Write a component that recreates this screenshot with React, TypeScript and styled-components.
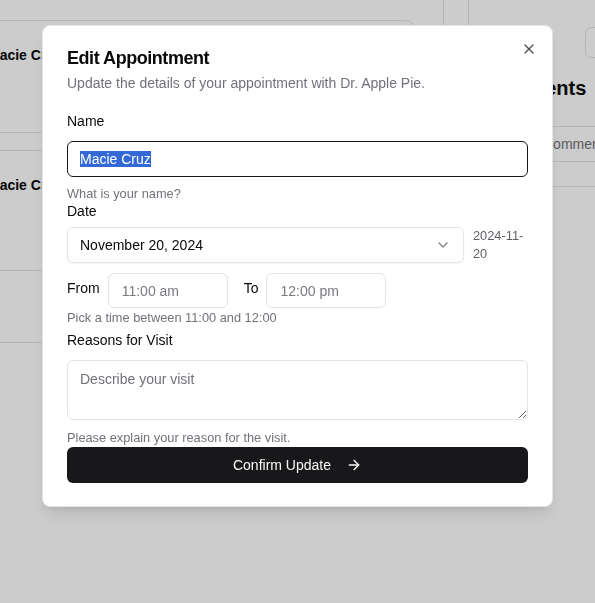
import React from "react";
import styled, { createGlobalStyle } from "styled-components";
import { X, ChevronDown, ArrowRight } from "lucide-react";

const GlobalStyle = createGlobalStyle`
  html, body {
    margin: 0;
    padding: 0;
  }
  body {
    font-family: "Liberation Sans", Arial, sans-serif;
    background: #ffffff;
    color: #09090b;
    overflow: hidden;
  }
  * {
    box-sizing: border-box;
  }
`;

// ---- page behind the dialog ----

const Page = styled.div`
  display: flex;
  height: 603px;
  overflow: hidden;
`;

const LeftPane = styled.div`
  flex: 0 0 504px;
  margin-left: -60px;
  height: 470px;
  padding: 20px 26px 0 23px;
  border-right: 1px solid #e4e4e7;
  display: flex;
  flex-direction: column;
  gap: 17px;
`;

const Card = styled.div<{ $height: number }>`
  height: ${(p) => p.$height}px;
  border: 1px solid #e4e4e7;
  border-radius: 12px;
  display: flex;
  flex-direction: column;
`;

const CardBody = styled.div`
  flex: 1;
  padding: 24px;
`;

const CardFooter = styled.div`
  height: 72px;
  border-top: 1px solid #e4e4e7;
`;

const PatientName = styled.div`
  font-size: 14px;
  line-height: 20px;
  font-weight: 700;
`;

const RightPane = styled.div`
  flex: 0 0 300px;
  margin-left: 24px;
  height: 470px;
  border-left: 1px solid #e4e4e7;
  display: flex;
  flex-direction: column;
`;

const TopBar = styled.div`
  display: flex;
  padding: 27px 0 0 116px;
`;

const OutlineButton = styled.div`
  width: 80px;
  height: 31px;
  border: 1px solid #e4e4e7;
  border-radius: 6px;
`;

const PaneTitle = styled.h2`
  margin: 16px 0 0 14px;
  font-size: 20px;
  line-height: 28px;
  font-weight: 700;
`;

const Table = styled.div`
  margin-top: 24px;
  border-top: 1px solid #e4e4e7;
`;

const TableRow = styled.div<{ $height: number }>`
  display: grid;
  grid-template-columns: 74px 1fr;
  align-items: center;
  height: ${(p) => p.$height}px;
  border-bottom: 1px solid #e4e4e7;
  font-size: 14px;
  color: #71717a;
`;

// ---- dialog ----

const Overlay = styled.div`
  position: fixed;
  inset: 0;
  background: rgba(0, 0, 0, 0.2);
`;

const Dialog = styled.div`
  position: fixed;
  left: 42px;
  top: 25px;
  width: 511px;
  padding: 23px 24px;
  background: #ffffff;
  border: 1px solid #e4e4e7;
  border-radius: 8px;
  box-shadow: 0 10px 15px -3px rgba(0, 0, 0, 0.1),
    0 4px 6px -4px rgba(0, 0, 0, 0.1);
  display: flex;
  flex-direction: column;
`;

const CloseButton = styled.button`
  position: absolute;
  top: 15px;
  right: 15px;
  width: 16px;
  height: 16px;
  padding: 0;
  border: none;
  background: none;
  color: #09090b;
  opacity: 0.7;
  display: flex;
  cursor: pointer;
`;

const Title = styled.h2`
  margin: 0;
  font-size: 18px;
  line-height: 18px;
  font-weight: 700;
  letter-spacing: -0.45px;
`;

const Subtitle = styled.p`
  margin: 6px 0 0;
  font-size: 14px;
  line-height: 20px;
  color: #71717a;
`;

const Label = styled.label<{ $top: number }>`
  display: block;
  margin-top: ${(p) => p.$top}px;
  font-size: 14px;
  line-height: 14px;
  color: #09090b;
`;

const Description = styled.p<{ $top: number }>`
  margin: ${(p) => p.$top}px 0 0;
  font-size: 12.8px;
  line-height: 16px;
  color: #71717a;
`;

const NameInput = styled.div`
  margin-top: 13px;
  height: 36px;
  padding: 0 12px;
  border: 1px solid #18181b;
  border-radius: 6px;
  display: flex;
  align-items: center;
  font-size: 14px;
`;

const Selected = styled.span`
  background: #3369d6;
  color: #ffffff;
`;

const DateRow = styled.div`
  margin-top: 9px;
  display: flex;
  align-items: flex-start;
  gap: 9px;
`;

const SelectTrigger = styled.div`
  flex: 1;
  height: 36px;
  padding: 0 12px;
  border: 1px solid #e4e4e7;
  border-radius: 6px;
  box-shadow: 0 1px 2px rgba(0, 0, 0, 0.05);
  display: flex;
  align-items: center;
  justify-content: space-between;
  font-size: 14px;

  svg {
    opacity: 0.5;
  }
`;

const DateHint = styled.span`
  width: 55px;
  font-size: 12.8px;
  line-height: 18px;
  color: #5f5f66;
`;

const TimeRow = styled.div`
  margin-top: 10px;
  display: flex;
  align-items: flex-start;
  gap: 8px;
`;

const TimeLabel = styled.span<{ $left?: number }>`
  margin-top: 8px;
  margin-left: ${(p) => p.$left ?? 0}px;
  font-size: 14px;
  line-height: 14px;
`;

const TimeBox = styled.div`
  width: 120px;
  height: 35px;
  padding-left: 13px;
  border: 1px solid #e4e4e7;
  border-radius: 6px;
  display: flex;
  align-items: center;
  font-size: 14px;
  color: #7a7a80;
`;

const Textarea = styled.textarea`
  display: block;
  width: 100%;
  height: 60px;
  margin-top: 13px;
  padding: 8px 12px;
  border: 1px solid #e4e4e7;
  border-radius: 6px;
  font-family: "Liberation Sans", Arial, sans-serif;
  font-size: 14px;
  line-height: 20px;
  color: #09090b;
  resize: vertical;
  outline: none;

  &::placeholder {
    color: #71717a;
  }
`;

const SubmitButton = styled.button`
  margin-top: 1px;
  height: 36px;
  border: none;
  border-radius: 6px;
  background: #18181b;
  color: #fafafa;
  font-family: "Liberation Sans", Arial, sans-serif;
  font-size: 14px;
  display: flex;
  align-items: center;
  justify-content: center;
  gap: 15px;
  cursor: pointer;
`;

const App: React.FC = () => {
  return (
    <>
      <GlobalStyle />
      <Page>
        <LeftPane>
          <Card $height={113}>
            <CardBody>
              <PatientName>Macie Cruz</PatientName>
            </CardBody>
          </Card>
          <Card $height={193}>
            <CardBody>
              <PatientName>Macie Cruz</PatientName>
            </CardBody>
            <CardFooter />
          </Card>
        </LeftPane>
        <RightPane>
          <TopBar>
            <OutlineButton />
          </TopBar>
          <PaneTitle>Comments</PaneTitle>
          <Table>
            <TableRow $height={35}>
              <span>Date</span>
              <span>Comment</span>
            </TableRow>
            <TableRow $height={25} />
          </Table>
        </RightPane>
      </Page>

      <Overlay />
      <Dialog role="dialog">
        <CloseButton aria-label="Close">
          <X size={16} />
        </CloseButton>
        <Title>Edit Appointment</Title>
        <Subtitle>Update the details of your appointment with Dr. Apple Pie.</Subtitle>

        <Label $top={21}>Name</Label>
        <NameInput>
          <Selected>Macie Cruz</Selected>
        </NameInput>
        <Description $top={9}>What is your name?</Description>

        <Label $top={2}>Date</Label>
        <DateRow>
          <SelectTrigger>
            <span>November 20, 2024</span>
            <ChevronDown size={16} />
          </SelectTrigger>
          <DateHint>2024-11-20</DateHint>
        </DateRow>

        <TimeRow>
          <TimeLabel>From</TimeLabel>
          <TimeBox>11:00 am</TimeBox>
          <TimeLabel $left={8}>To</TimeLabel>
          <TimeBox>12:00 pm</TimeBox>
        </TimeRow>
        <Description $top={2}>Pick a time between 11:00 and 12:00</Description>

        <Label $top={7}>Reasons for Visit</Label>
        <Textarea placeholder="Describe your visit" />
        <Description $top={10}>Please explain your reason for the visit.</Description>

        <SubmitButton>
          Confirm Update
          <ArrowRight size={16} />
        </SubmitButton>
      </Dialog>
    </>
  );
};

export default App;
